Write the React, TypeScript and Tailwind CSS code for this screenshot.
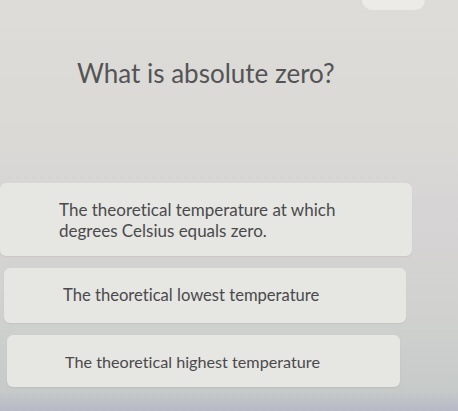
export default function App() {
  const answers = [
    {
      text: "The theoretical temperature at which degrees Celsius equals zero.",
      box: "ml-0 w-[412px] h-[73px] pl-[59px] pr-[60px] text-[17px] leading-[21px]",
    },
    {
      text: "The theoretical lowest temperature",
      box: "ml-[4px] w-[402px] h-[55px] pl-[59px] text-[16.6px]",
    },
    {
      text: "The theoretical highest temperature",
      box: "ml-[7px] w-[393px] h-[52px] pl-[58px] text-[16.2px]",
    },
  ];

  return (
    <div
      className="relative h-[411px] w-full overflow-hidden [font-variant-ligatures:none] bg-[linear-gradient(180deg,#dddcd8_0%,#dad9d6_35%,#d7d4d5_50%,#d1d2d0_75%,#c6cac9_95%,#b7bac6_100%)]"
      style={{ fontFamily: "Lato, 'Noto Sans', sans-serif" }}
    >
      {/* tab peeking from the top */}
      <div className="absolute left-[362px] top-0 h-[10px] w-[63px] rounded-b-[10px] bg-[#ecebe8]" />

      <div className="flex flex-col">
        <h1 className="pl-[77px] pt-[57px] text-[26px] leading-[32px] font-normal text-[#545456]">
          What is absolute zero?
        </h1>

        <div className="mt-[94px] flex flex-col gap-[12px]">
          {answers.map((a) => (
            <div
              key={a.text}
              className={`flex items-center rounded-[6px] bg-[#e6e6e3] leading-[21px] text-[#4a4a4c] shadow-[0_1px_2px_rgba(0,0,0,0.06)] ${a.box}`}
            >
              {a.text}
            </div>
          ))}
        </div>
      </div>
    </div>
  );
}
